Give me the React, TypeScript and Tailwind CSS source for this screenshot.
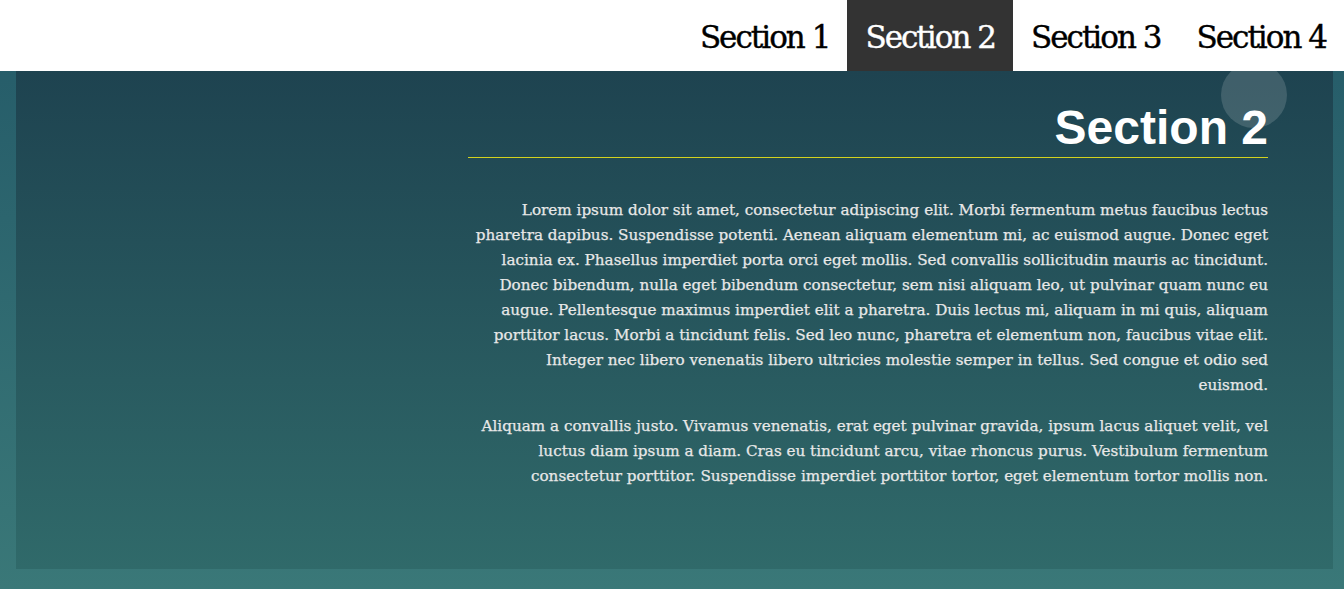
import React from 'react';

const tabs = ['Section 1', 'Section 2', 'Section 3', 'Section 4'];

const App: React.FC = () => {
  const active = 'Section 2';

  return (
    <div className="relative h-[589px] overflow-hidden bg-gradient-to-b from-[#245a68] to-[#3a7878]">
      {/* top nav */}
      <header className="relative z-10 flex h-[71px] justify-end bg-white">
        {tabs.map((tab) => (
          <a
            key={tab}
            href="#"
            className={
              tab === active
                ? 'flex items-center bg-[#333333] px-[18px] pt-[3px] font-["DejaVu_Serif",serif] text-[31px] tracking-[-2px] text-white [-webkit-text-stroke:0.4px_white]'
                : 'flex items-center px-[18px] pt-[3px] font-["DejaVu_Serif",serif] text-[31px] tracking-[-2px] text-black [-webkit-text-stroke:0.4px_black]'
            }
          >
            {tab}
          </a>
        ))}
      </header>

      {/* decorative bubble */}
      <div className="absolute left-[1221px] top-[62px] h-[66px] w-[66px] rounded-full bg-white/15" />

      <main className="ml-[16px] mr-[11px] h-[498px] bg-gradient-to-b from-[#1e4350] to-[#306a6a]">
        <div className="flex justify-end pr-[65px] pt-[33px]">
          <section className="w-[800px] text-right">
            <h1 className='border-b border-[#d2d21e] pb-[5px] font-["Liberation_Sans",Arial,sans-serif] text-[48px] font-bold leading-none text-white'>
              Section 2
            </h1>
            <div className='ml-auto mt-[40px] w-[794px] space-y-[16px] font-["DejaVu_Serif",serif] text-[15.2px] leading-[25px] text-[#e8e8e8] [-webkit-text-stroke:0.25px_#e8e8e8]'>
              <p>
                Lorem ipsum dolor sit amet, consectetur adipiscing elit. Morbi fermentum metus faucibus lectus
                pharetra dapibus. Suspendisse potenti. Aenean aliquam elementum mi, ac euismod augue. Donec eget
                lacinia ex. Phasellus imperdiet porta orci eget mollis. Sed convallis sollicitudin mauris ac
                tincidunt. Donec bibendum, nulla eget bibendum consectetur, sem nisi aliquam leo, ut pulvinar quam
                nunc eu augue. Pellentesque maximus imperdiet elit a pharetra. Duis lectus mi, aliquam in mi quis,
                aliquam porttitor lacus. Morbi a tincidunt felis. Sed leo nunc, pharetra et elementum non, faucibus
                vitae elit. Integer nec libero venenatis libero ultricies molestie semper in tellus. Sed congue et
                odio sed euismod.
              </p>
              <p>
                Aliquam a convallis justo. Vivamus venenatis, erat eget pulvinar gravida, ipsum lacus aliquet velit,
                vel luctus diam ipsum a diam. Cras eu tincidunt arcu, vitae rhoncus purus. Vestibulum fermentum
                consectetur porttitor. Suspendisse imperdiet porttitor tortor, eget elementum tortor mollis non.
              </p>
            </div>
          </section>
        </div>
      </main>
    </div>
  );
};

export default App;
